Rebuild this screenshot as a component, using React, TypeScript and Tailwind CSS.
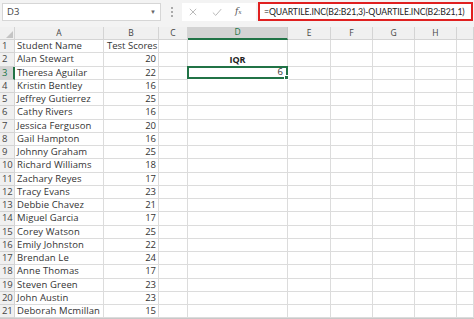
import React from 'react';

const rows: [string, number | null][] = [
  ['Alan Stewart', 20],
  ['Theresa Aguilar', 22],
  ['Kristin Bentley', 16],
  ['Jeffrey Gutierrez', 25],
  ['Cathy Rivers', 16],
  ['Jessica Ferguson', 20],
  ['Gail Hampton', 16],
  ['Johnny Graham', 25],
  ['Richard Williams', 18],
  ['Zachary Reyes', 17],
  ['Tracy Evans', 23],
  ['Debbie Chavez', 21],
  ['Miguel Garcia', 17],
  ['Corey Watson', 25],
  ['Emily Johnston', 22],
  ['Brendan Le', 24],
  ['Anne Thomas', 17],
  ['Steven Green', 23],
  ['John Austin', 23],
  ['Deborah Mcmillan', 15],
];

const cols = ['A', 'B', 'C', 'D', 'E', 'F', 'G', 'H', ''];
const gridCols = 'grid-cols-[15px_89px_55px_29px_100px_43px_42px_42px_42px_1fr]';

export default function App() {
  const body: React.ReactNode[] = [];
  for (let r = 1; r <= 21; r++) {
    const selRow = r === 3;
    body.push(
      <div
        key={`n${r}`}
        className={`h-[13.25px] flex items-center pl-[2px] text-[9.5px] tracking-[-0.3px] border-b border-r ${
          selRow ? 'bg-[#d3d3d3] border-r-[#217346] border-r-2 text-[#217346]' : 'bg-[#f0f0f0] border-[#d4d4d4] text-[#444]'
        } border-b-[#d4d4d4]`}
      >
        {r}
      </div>
    );
    const name = r === 1 ? 'Student Name' : rows[r - 2][0];
    const score = r === 1 ? 'Test Scores' : String(rows[r - 2][1]);
    body.push(
      <div key={`a${r}`} className="h-[13.25px] flex items-center pl-[2px] border-b border-r border-[#dcdcdc] text-[9.5px] tracking-[0.1px] text-[#333] whitespace-nowrap">
        {name}
      </div>
    );
    body.push(
      <div key={`b${r}`} className={`h-[13.25px] flex items-center ${r === 1 ? 'justify-start pl-[3px]' : 'justify-end pr-[2px]'} border-b border-r border-[#dcdcdc] text-[9.5px] text-[#333] whitespace-nowrap`}>
        {score}
      </div>
    );
    body.push(<div key={`c${r}`} className="h-[13.25px] border-b border-r border-[#dcdcdc]" />);
    if (r === 3) {
      body.push(
        <div key={`d${r}`} className="h-[13.25px] relative flex items-center justify-end pr-[3px] border-2 border-[#217346] text-[9.5px] text-[#333] -mt-px -ml-px">
          6
          <span className="absolute -right-[3px] -bottom-[3px] w-[5px] h-[5px] bg-[#217346] border border-white" />
        </div>
      );
    } else {
      body.push(
        <div key={`d${r}`} className="h-[13.25px] flex items-center justify-center border-b border-r border-[#dcdcdc] text-[9px] font-bold text-[#222]">
          {r === 2 ? 'IQR' : ''}
        </div>
      );
    }
    for (const c of ['e', 'f', 'g', 'h', 'i']) {
      body.push(<div key={`${c}${r}`} className="h-[13.25px] border-b border-r border-[#dcdcdc]" />);
    }
  }

  return (
    <div className="w-[474px] h-[319px] overflow-hidden bg-white font-['Open_Sans','Lato',sans-serif]">
      {/* formula bar */}
      <div className="h-[27px] bg-[#f3f3f3] flex items-start pt-[2px] relative">
        <div className="ml-[2px] mt-px w-[159px] h-[18px] bg-white border border-[#d6d6d6] flex items-center justify-between pl-[4px] pr-[4px] text-[9.5px] text-[#444]">
          <span>D3</span>
          <span className="text-[6px] text-[#666]">▼</span>
        </div>
        <div className="w-[21px] h-[18px] mt-px flex flex-col items-center justify-center gap-[2px]">
          <span className="w-[2px] h-[2px] bg-[#aaa]" />
          <span className="w-[2px] h-[2px] bg-[#aaa]" />
          <span className="w-[2px] h-[2px] bg-[#aaa]" />
        </div>
        <div className="mt-px w-[74px] h-[18px] bg-white flex items-center text-[#b8b8b8]">
          <svg className="ml-[7px]" width="8" height="8" viewBox="0 0 10 10" stroke="currentColor" strokeWidth="1.2">
            <path d="M1 1L9 9M9 1L1 9" />
          </svg>
          <svg className="ml-[15px]" width="10" height="9" viewBox="0 0 12 10" fill="none" stroke="currentColor" strokeWidth="1.2">
            <path d="M1 5L4.5 8.5L11 1" />
          </svg>
          <span className="ml-[13px] text-[9px] italic text-[#555] font-['DejaVu_Serif',serif]">f<span className="text-[6px]">x</span></span>
        </div>
        <div className="ml-[2px] w-[215px] h-[19px] bg-white border-2 border-[#e02020] flex items-center pl-[4px] text-[8.7px] tracking-[-0.1px] text-[#222] whitespace-nowrap overflow-hidden font-['Lato',sans-serif]">
          =QUARTILE.INC(B2:B21,3)-QUARTILE.INC(B2:B21,1)
        </div>
      </div>
      {/* grid */}
      <div className={`grid ${gridCols}`}>
        <div className="h-[13px] bg-[#f0f0f0] border-b border-r border-[#d4d4d4] flex items-end justify-end p-[1px]">
          <svg width="7" height="7" viewBox="0 0 7 7"><path d="M7 0V7H0Z" fill="#c4c4c4" /></svg>
        </div>
        {cols.map((c, i) => (
          <div
            key={`h${i}`}
            className={`h-[13px] flex items-center justify-center text-[8.5px] border-r ${
              c === 'D'
                ? 'bg-[#d3d3d3] border-b-2 border-b-[#217346] text-[#217346] border-r-[#c8c8c8]'
                : 'bg-[#f0f0f0] border-b border-[#d4d4d4] text-[#444]'
            }`}
          >
            {c}
          </div>
        ))}
        {body}
      </div>
      <div className="h-[3px] bg-[#c8c8c8]" />
    </div>
  );
}
